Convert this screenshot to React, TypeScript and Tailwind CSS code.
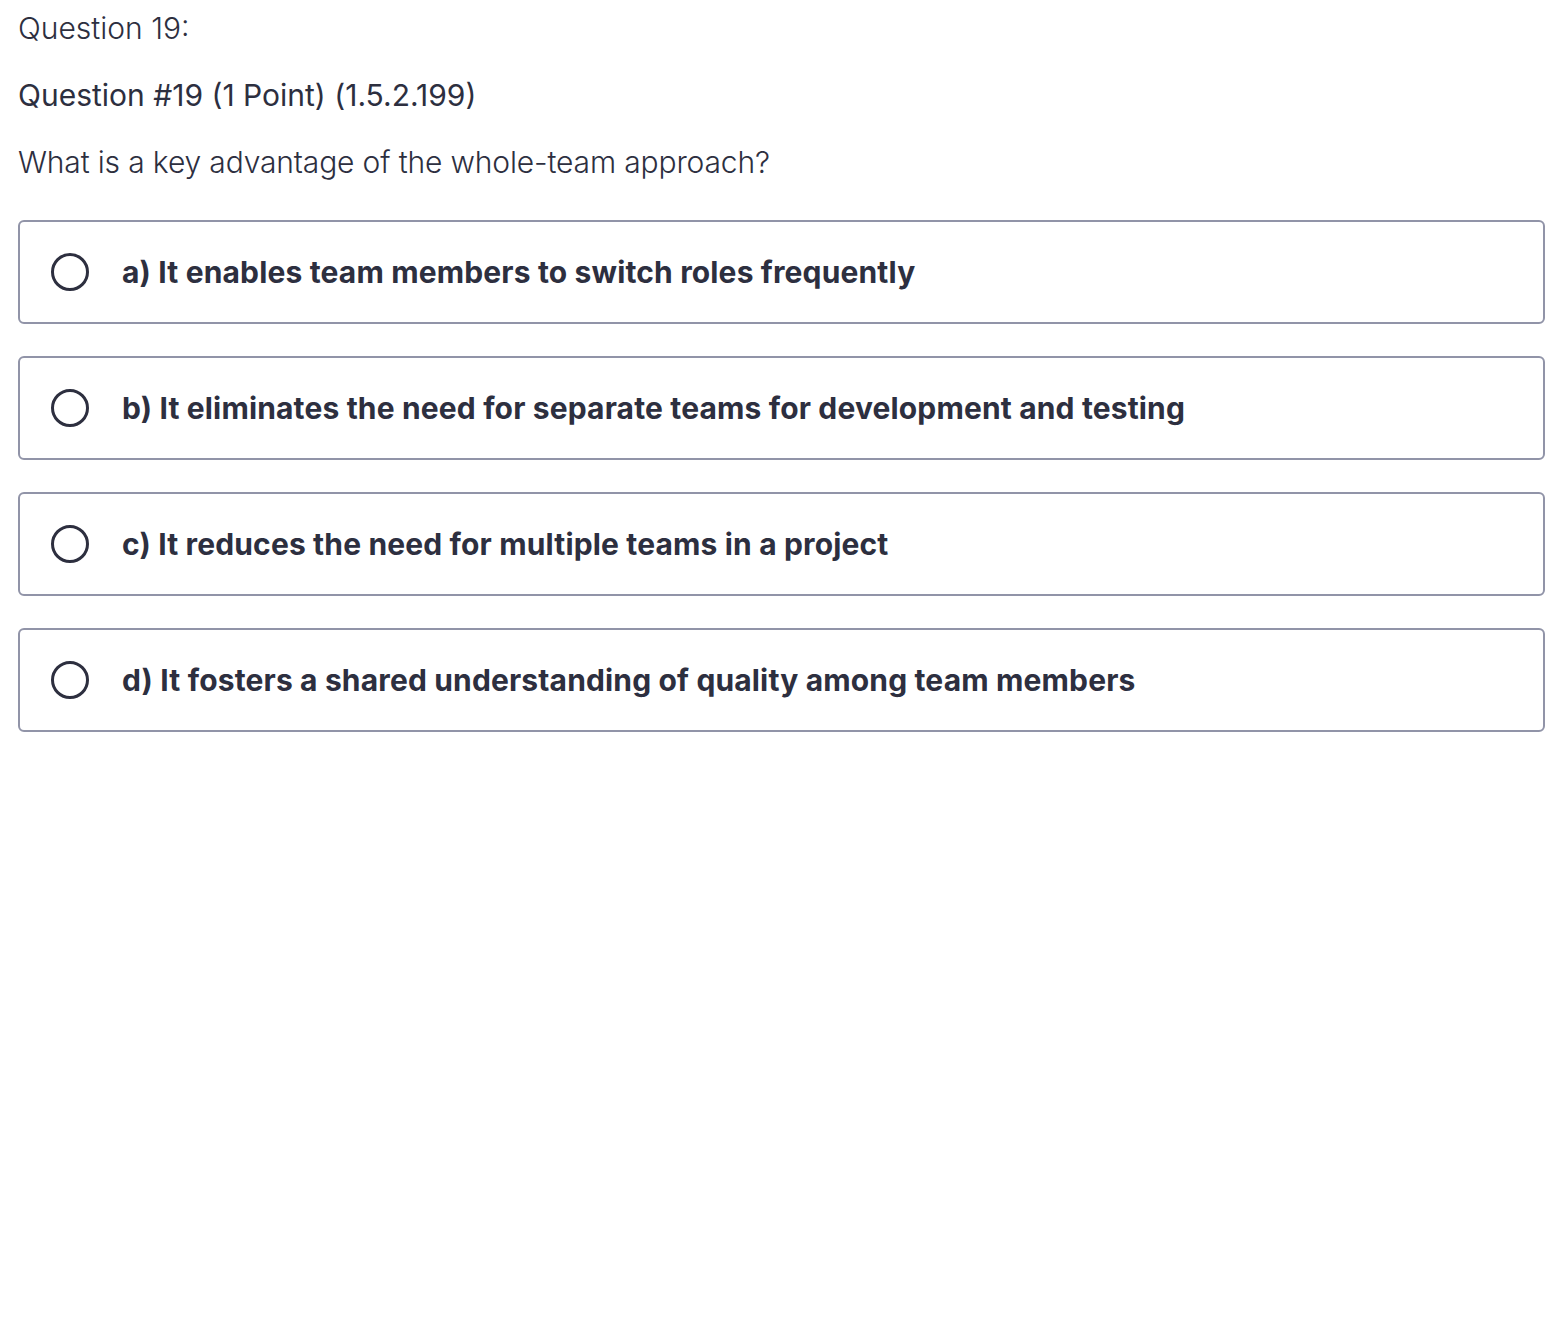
const options = [
  'a) It enables team members to switch roles frequently',
  'b) It eliminates the need for separate teams for development and testing',
  'c) It reduces the need for multiple teams in a project',
  'd) It fosters a shared understanding of quality among team members',
]

export default function App() {
  return (
    <div className="min-h-screen bg-white text-[#2d2f3f] font-['Inter',sans-serif] pl-[18px] pr-[21px]">
      <div className="pt-[9px] text-[30px] leading-[38px] font-light">Question 19:</div>
      <div className="mt-[29px] text-[30px] leading-[38px] font-normal">Question #19 (1 Point) (1.5.2.199)</div>
      <div className="mt-[29px] text-[30px] leading-[38px] font-light tracking-[-0.15px]">What is a key advantage of the whole-team approach?</div>
      <div className="mt-[39px] flex flex-col gap-[32px]">
        {options.map((o) => (
          <label key={o} className="flex items-center h-[104px] border-2 border-[#9194a8] rounded-[6px] pl-[31px] cursor-pointer">
            <span className="w-[38px] h-[38px] rounded-full border-[3.5px] border-[#2d2f3f] shrink-0" />
            <span className="ml-[33px] text-[30px] font-bold tracking-[0.15px]">{o}</span>
          </label>
        ))}
      </div>
    </div>
  )
}
